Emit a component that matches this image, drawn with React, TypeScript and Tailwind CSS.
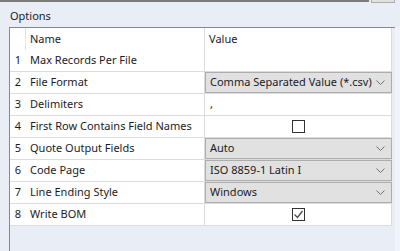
import React from "react";

type Row = {
  n: number;
  name: string;
  kind: "text" | "select" | "check";
  value?: string;
  checked?: boolean;
};

const rows: Row[] = [
  { n: 1, name: "Max Records Per File", kind: "text", value: "" },
  { n: 2, name: "File Format", kind: "select", value: "Comma Separated Value (*.csv)" },
  { n: 3, name: "Delimiters", kind: "text", value: "," },
  { n: 4, name: "First Row Contains Field Names", kind: "check", checked: false },
  { n: 5, name: "Quote Output Fields", kind: "select", value: "Auto" },
  { n: 6, name: "Code Page", kind: "select", value: "ISO 8859-1 Latin I" },
  { n: 7, name: "Line Ending Style", kind: "select", value: "Windows" },
  { n: 8, name: "Write BOM", kind: "check", checked: true },
];

function Chevron() {
  return (
    <svg width="9" height="5" viewBox="0 0 9 5" className="shrink-0">
      <polyline points="0.5,0.5 4.5,4.5 8.5,0.5" fill="none" stroke="#707070" strokeWidth="1" />
    </svg>
  );
}

function CheckBox({ checked }: { checked?: boolean }) {
  return (
    <div className="w-[13px] h-[13px] border border-[#333333] bg-white flex items-center justify-center">
      {checked && (
        <svg width="11" height="11" viewBox="0 0 11 11">
          <polyline points="1.5,5.5 4.5,8.5 9.5,2" fill="none" stroke="#4d4d4d" strokeWidth="1.3" />
        </svg>
      )}
    </div>
  );
}

function ValueCell({ row }: { row: Row }) {
  if (row.kind === "select") {
    return (
      <div className="w-[187px] h-full border border-[#adadad] bg-[#e1e1e1] flex items-center pl-[4px] pr-[6px]">
        <span className="flex-1 truncate">{row.value}</span>
        <Chevron />
      </div>
    );
  }
  if (row.kind === "check") {
    return (
      <div className="w-[187px] h-full border-r border-[#dcdcdc] bg-white flex items-center justify-center">
        <CheckBox checked={row.checked} />
      </div>
    );
  }
  return (
    <div className="w-[187px] h-full border-r border-[#dcdcdc] bg-white flex items-center pl-[5px]">
      {row.value}
    </div>
  );
}

export default function App() {
  return (
    <div
      className="w-[400px] h-[251px] bg-[#e9edf6] overflow-hidden text-[11px] text-[#1b1b1f] flex flex-col"
      style={{ fontFamily: '"Noto Sans", "Liberation Sans", sans-serif' }}
    >
      <div className="flex h-[4px] shrink-0">
        <div className="w-[369px] h-[2px] bg-[#7a7a7a]" />
        <div className="ml-[2px] w-[24px] h-[3px] border border-t-0 border-[#adadad] bg-[#e1e1e1]" />
      </div>

      <div className="pl-[10px] pt-[4px] h-[23px] leading-[15px] shrink-0">Options</div>

      <div className="flex flex-1">
        <div className="ml-[9px] w-[386px] border-l border-t border-[#828790] flex flex-col">
          {/* header */}
          <div className="flex h-[22px] w-[382px] bg-white">
            <div className="w-[16px] border-r border-[#e3e3e3]" />
            <div className="w-[179px] border-r border-[#dcdcdc] flex items-center pl-[4px]">Name</div>
            <div className="w-[187px] border-r border-[#dcdcdc] flex items-center pl-[4px]">Value</div>
          </div>

          {rows.map((row) => (
            <div key={row.n} className="flex h-[22px] w-[382px] bg-white border-b border-[#dcdcdc]">
              <div className="w-[16px] flex items-center justify-center">{row.n}</div>
              <div className="w-[179px] border-r border-[#dcdcdc] flex items-center pl-[4px] whitespace-nowrap">
                {row.name}
              </div>
              <ValueCell row={row} />
            </div>
          ))}
        </div>
        <div className="flex-1 bg-[#f1f3fa]" />
      </div>
    </div>
  );
}
